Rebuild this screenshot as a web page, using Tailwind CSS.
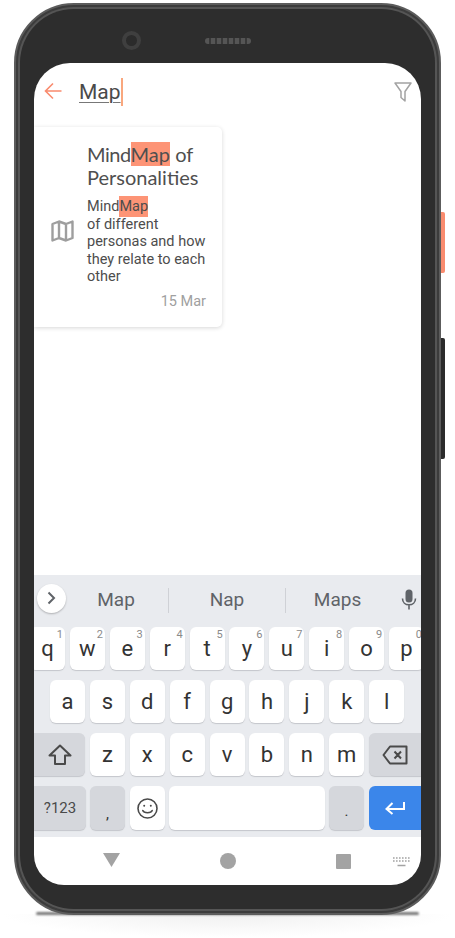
<!DOCTYPE html>
<html lang="en">
<head>
    <meta charset="UTF-8">
    <title>Search notes</title>
    <script src="https://cdn.jsdelivr.net/npm/@tailwindcss/browser@4"></script>
</head>
<body class="bg-white font-['Roboto',sans-serif]">

<div class="w-[455px] h-[938px] overflow-hidden pl-[14px] pt-[3px] relative">
    <!-- Shadow under the phone -->
    <div class="absolute left-[0px] top-[914px] w-[455px] h-[24px] bg-[radial-gradient(ellipse_at_top,#f0f0f0,#ffffff_70%)]"></div>
    <div class="absolute left-[36px] top-[912px] w-[383px] h-[3px] rounded-full bg-[#777777] blur-[1px]"></div>

    <!-- Side buttons -->
    <div class="absolute left-[439px] top-[212px] w-[6px] h-[61px] rounded-r-[2px] bg-[#f98b6e]"></div>
    <div class="absolute left-[439px] top-[338px] w-[6px] h-[121px] rounded-r-[2px] bg-[#2b2b2b]"></div>

    <!-- Phone frame -->
    <div class="relative w-[427px] h-[912px] rounded-[60px] bg-[#3c3c3c] border-2 border-[#5c5c5c] p-[2px]">
        <div class="w-full h-full rounded-[56px] bg-[#555555] p-[2px]">
            <div class="w-full h-full rounded-[54px] bg-[#2d2d2d] px-[14px] flex flex-col">

                <!-- Top bezel: camera and speaker -->
                <div class="h-[54px] shrink-0 flex items-start pt-[22px]">
                    <div class="ml-[88px] w-[19px] h-[19px] rounded-full border-[4px] border-[#3f3f3f] bg-[#2b2b2b]"></div>
                    <div class="ml-[64px] mt-[7px] w-[46px] h-[6px] rounded-full bg-[repeating-linear-gradient(90deg,#555555_0_4px,#383838_4px_6px)] blur-[0.5px]"></div>
                </div>

                <!-- Screen -->
                <div class="w-[387px] h-[822px] shrink-0 rounded-t-[36px] rounded-b-[30px] bg-white overflow-hidden flex flex-col">

                    <!-- Search bar -->
                    <div class="h-[64px] shrink-0 flex items-center pl-[10px] pr-[9px]">
                        <svg class="w-[18px] h-[18px] mt-[-8px]" viewBox="0 0 18 18" fill="none" stroke="#f98b6e" stroke-width="1.6">
                            <path d="M17.5 9H1.5M9 1.5L1.5 9L9 16.5"/>
                        </svg>
                        <div class="ml-[17px] mt-[-6px] h-[28px] flex items-center text-[21px] text-[#4a4a4a] leading-[28px] underline underline-offset-[3px] decoration-[#777777] decoration-[1px]">Map</div>
                        <div class="w-[2px] h-[28px] mt-[-6px] bg-[#f9a77e]"></div>
                        <svg class="ml-auto w-[18px] h-[20px] mt-[-6px]" viewBox="0 0 18 20" fill="none" stroke="#a3a3a3" stroke-width="1.5" stroke-linejoin="round">
                            <path d="M1 1H17L11 9.5V19L7 15.5V9.5Z"/>
                        </svg>
                    </div>

                    <!-- Results -->
                    <div class="flex-1 min-h-0">
                        <div class="w-[188px] h-[200px] rounded-r-[5px] bg-white shadow-[0_1px_4px_rgba(0,0,0,0.16)] flex pr-[16px]">
                            <div class="w-[53px] shrink-0 flex items-center justify-center pl-[3px] pt-[7px]">
                                <svg class="w-[23px] h-[22px]" viewBox="0 0 23 22" fill="none" stroke="#9e9e9e" stroke-width="2.4" stroke-linejoin="round">
                                    <path d="M1.5 4L8 1.5L15 4L21.5 1.5V18L15 20.5L8 18L1.5 20.5Z M8 1.5V18 M15 4V20.5"/>
                                </svg>
                            </div>
                            <div class="flex-1 min-w-0 pt-[16px]">
                                <h3 class="font-['Lato',sans-serif] text-[20px] leading-[23px] text-[#4f4f4f]"><span class="tracking-[-0.5px]">Mind</span><span class="bg-[#fd9476]">Map</span> of Personalities</h3>
                                <p class="mt-[9px] text-[14.5px] leading-[17.6px] text-[#4d4d4d]">Mind<span class="bg-[#fd9476] py-[2px]">Map</span><br>of different personas and how they relate to each other</p>
                                <div class="mt-[7px] text-right text-[14.5px] leading-[18px] text-[#a0a0a0]">15 Mar</div>
                            </div>
                        </div>
                    </div>

                    <!-- Keyboard -->
                    <div class="h-[262px] shrink-0 bg-[#e9ebef] text-[22px] text-[#333333]">
                        <!-- Suggestions -->
                        <div class="h-[52px] flex items-center pb-[2px] text-[19px] text-[#5f6368]">
                            <div class="ml-[3px] w-[29px] h-[29px] mt-[-4px] shrink-0 rounded-full bg-white shadow-[0_1px_2px_rgba(0,0,0,0.25)] flex items-center justify-center">
                                <svg class="w-[9px] h-[14px]" viewBox="0 0 9 14" fill="none" stroke="#5f6368" stroke-width="2"><path d="M1.5 1.5L7 7L1.5 12.5"/></svg>
                            </div>
                            <div class="w-[104px] text-center ml-[-2px]">Map</div>
                            <div class="w-px h-[25px] bg-[#cfd1d6]"></div>
                            <div class="w-[116px] text-center">Nap</div>
                            <div class="w-px h-[25px] bg-[#cfd1d6]"></div>
                            <div class="w-[103px] text-center">Maps</div>
                            <svg class="ml-[12px] w-[16px] h-[22px]" viewBox="0 0 16 22" fill="none">
                                <rect x="4.5" y="0.5" width="7" height="13" rx="3.5" fill="#5f6368"/>
                                <path d="M1.5 9.5C1.5 13.5 4.5 15.8 8 15.8S14.5 13.5 14.5 9.5M8 15.8V20.5" stroke="#5f6368" stroke-width="1.6"/>
                            </svg>
                        </div>

                        <!-- Row 1 -->
                        <div class="flex gap-[4.9px] ml-[-4px] w-[400px]">
                            <div class="relative w-[35px] h-[43px] shrink-0 rounded-[6px] bg-white shadow-[0_1px_1px_#c4c6cb] flex items-center justify-center">q<span class="absolute right-[2px] top-[1px] text-[11px] leading-[14px] text-[#8a8a8a]">1</span></div>
                            <div class="relative w-[35px] h-[43px] shrink-0 rounded-[6px] bg-white shadow-[0_1px_1px_#c4c6cb] flex items-center justify-center">w<span class="absolute right-[2px] top-[1px] text-[11px] leading-[14px] text-[#8a8a8a]">2</span></div>
                            <div class="relative w-[35px] h-[43px] shrink-0 rounded-[6px] bg-white shadow-[0_1px_1px_#c4c6cb] flex items-center justify-center">e<span class="absolute right-[2px] top-[1px] text-[11px] leading-[14px] text-[#8a8a8a]">3</span></div>
                            <div class="relative w-[35px] h-[43px] shrink-0 rounded-[6px] bg-white shadow-[0_1px_1px_#c4c6cb] flex items-center justify-center">r<span class="absolute right-[2px] top-[1px] text-[11px] leading-[14px] text-[#8a8a8a]">4</span></div>
                            <div class="relative w-[35px] h-[43px] shrink-0 rounded-[6px] bg-white shadow-[0_1px_1px_#c4c6cb] flex items-center justify-center">t<span class="absolute right-[2px] top-[1px] text-[11px] leading-[14px] text-[#8a8a8a]">5</span></div>
                            <div class="relative w-[35px] h-[43px] shrink-0 rounded-[6px] bg-white shadow-[0_1px_1px_#c4c6cb] flex items-center justify-center">y<span class="absolute right-[2px] top-[1px] text-[11px] leading-[14px] text-[#8a8a8a]">6</span></div>
                            <div class="relative w-[35px] h-[43px] shrink-0 rounded-[6px] bg-white shadow-[0_1px_1px_#c4c6cb] flex items-center justify-center">u<span class="absolute right-[2px] top-[1px] text-[11px] leading-[14px] text-[#8a8a8a]">7</span></div>
                            <div class="relative w-[35px] h-[43px] shrink-0 rounded-[6px] bg-white shadow-[0_1px_1px_#c4c6cb] flex items-center justify-center">i<span class="absolute right-[2px] top-[1px] text-[11px] leading-[14px] text-[#8a8a8a]">8</span></div>
                            <div class="relative w-[35px] h-[43px] shrink-0 rounded-[6px] bg-white shadow-[0_1px_1px_#c4c6cb] flex items-center justify-center">o<span class="absolute right-[2px] top-[1px] text-[11px] leading-[14px] text-[#8a8a8a]">9</span></div>
                            <div class="relative w-[35px] h-[43px] shrink-0 rounded-[6px] bg-white shadow-[0_1px_1px_#c4c6cb] flex items-center justify-center">p<span class="absolute right-[2px] top-[1px] text-[11px] leading-[14px] text-[#8a8a8a]">0</span></div>
                        </div>

                        <!-- Row 2 -->
                        <div class="flex gap-[4.9px] mt-[10px] pl-[16px]">
                            <div class="w-[35px] h-[43px] rounded-[6px] bg-white shadow-[0_1px_1px_#c4c6cb] flex items-center justify-center">a</div>
                            <div class="w-[35px] h-[43px] rounded-[6px] bg-white shadow-[0_1px_1px_#c4c6cb] flex items-center justify-center">s</div>
                            <div class="w-[35px] h-[43px] rounded-[6px] bg-white shadow-[0_1px_1px_#c4c6cb] flex items-center justify-center">d</div>
                            <div class="w-[35px] h-[43px] rounded-[6px] bg-white shadow-[0_1px_1px_#c4c6cb] flex items-center justify-center">f</div>
                            <div class="w-[35px] h-[43px] rounded-[6px] bg-white shadow-[0_1px_1px_#c4c6cb] flex items-center justify-center">g</div>
                            <div class="w-[35px] h-[43px] rounded-[6px] bg-white shadow-[0_1px_1px_#c4c6cb] flex items-center justify-center">h</div>
                            <div class="w-[35px] h-[43px] rounded-[6px] bg-white shadow-[0_1px_1px_#c4c6cb] flex items-center justify-center">j</div>
                            <div class="w-[35px] h-[43px] rounded-[6px] bg-white shadow-[0_1px_1px_#c4c6cb] flex items-center justify-center">k</div>
                            <div class="w-[35px] h-[43px] rounded-[6px] bg-white shadow-[0_1px_1px_#c4c6cb] flex items-center justify-center">l</div>
                        </div>

                        <!-- Row 3 -->
                        <div class="flex gap-[4.9px] mt-[10px]">
                            <div class="w-[51px] h-[43px] rounded-r-[6px] bg-[#d5d7dc] shadow-[0_1px_1px_#c4c6cb] flex items-center justify-center">
                                <svg class="w-[24px] h-[22px]" viewBox="0 0 24 22" fill="none" stroke="#4a4a4a" stroke-width="2" stroke-linejoin="round"><path d="M12 1.5L22.5 11.5H17V20H7V11.5H1.5Z"/></svg>
                            </div>
                            <div class="w-[35px] h-[43px] rounded-[6px] bg-white shadow-[0_1px_1px_#c4c6cb] flex items-center justify-center">z</div>
                            <div class="w-[35px] h-[43px] rounded-[6px] bg-white shadow-[0_1px_1px_#c4c6cb] flex items-center justify-center">x</div>
                            <div class="w-[35px] h-[43px] rounded-[6px] bg-white shadow-[0_1px_1px_#c4c6cb] flex items-center justify-center">c</div>
                            <div class="w-[35px] h-[43px] rounded-[6px] bg-white shadow-[0_1px_1px_#c4c6cb] flex items-center justify-center">v</div>
                            <div class="w-[35px] h-[43px] rounded-[6px] bg-white shadow-[0_1px_1px_#c4c6cb] flex items-center justify-center">b</div>
                            <div class="w-[35px] h-[43px] rounded-[6px] bg-white shadow-[0_1px_1px_#c4c6cb] flex items-center justify-center">n</div>
                            <div class="w-[35px] h-[43px] rounded-[6px] bg-white shadow-[0_1px_1px_#c4c6cb] flex items-center justify-center">m</div>
                            <div class="flex-1 h-[43px] rounded-l-[6px] bg-[#d5d7dc] shadow-[0_1px_1px_#c4c6cb] flex items-center justify-center">
                                <svg class="w-[26px] h-[20px]" viewBox="0 0 26 20" fill="none" stroke="#4a4a4a" stroke-width="2" stroke-linejoin="round"><path d="M8 1.5H24.5V18.5H8L1.5 10Z M12.5 6.5L19 13.5M19 6.5L12.5 13.5"/></svg>
                            </div>
                        </div>

                        <!-- Row 4 -->
                        <div class="flex mt-[10px]">
                            <div class="w-[52px] h-[44px] rounded-r-[6px] bg-[#d5d7dc] shadow-[0_1px_1px_#c4c6cb] flex items-center justify-center text-[15px] text-[#4a4a4a]">?123</div>
                            <div class="ml-[4px] w-[35px] h-[44px] rounded-[6px] bg-[#d5d7dc] shadow-[0_1px_1px_#c4c6cb] flex items-end justify-center pb-[8px] text-[15px] leading-[15px]">,</div>
                            <div class="ml-[5px] w-[35px] h-[44px] rounded-[6px] bg-white shadow-[0_1px_1px_#c4c6cb] flex items-center justify-center">
                                <svg class="w-[21px] h-[21px]" viewBox="0 0 21 21" fill="none" stroke="#4a4a4a" stroke-width="1.6"><circle cx="10.5" cy="10.5" r="9.5"/><path d="M5.8 12.5C7 15.5 14 15.5 15.2 12.5" stroke-linecap="round"/><circle cx="7.2" cy="7.8" r="1" fill="#4a4a4a" stroke="none"/><circle cx="13.8" cy="7.8" r="1" fill="#4a4a4a" stroke="none"/></svg>
                            </div>
                            <div class="ml-[4px] w-[156px] h-[44px] rounded-[6px] bg-white shadow-[0_1px_1px_#c4c6cb]"></div>
                            <div class="ml-[4px] w-[35px] h-[44px] rounded-[6px] bg-[#d5d7dc] shadow-[0_1px_1px_#c4c6cb] flex items-end justify-center pb-[11px] text-[15px] leading-[15px]">.</div>
                            <div class="ml-[5px] flex-1 h-[44px] rounded-l-[6px] bg-[#3b86ea] flex items-center justify-center">
                                <svg class="w-[20px] h-[14px]" viewBox="0 0 20 14" fill="none" stroke="white" stroke-width="2"><path d="M19 1V8H2M7.5 2L1.5 8L7.5 13"/></svg>
                            </div>
                        </div>
                    </div>

                    <!-- Navigation bar -->
                    <div class="h-[48px] shrink-0 relative">
                        <svg class="absolute left-[69px] top-[16px] w-[17px] h-[14px]" viewBox="0 0 17 14"><path d="M0 0H17L8.5 14Z" fill="#a3a3a3"/></svg>
                        <div class="absolute left-[186px] top-[16px] w-[16px] h-[16px] rounded-full bg-[#a3a3a3]"></div>
                        <div class="absolute left-[302px] top-[17px] w-[15px] h-[15px] rounded-[1px] bg-[#a3a3a3]"></div>
                        <svg class="absolute left-[359px] top-[20px] w-[17px] h-[10px]" viewBox="0 0 17 10" fill="none" stroke="#a3a3a3" stroke-width="1.4"><path d="M0 1H17M0 4H17" stroke-dasharray="1.6 1.4"/><path d="M4.5 8.5H12.5"/></svg>
                    </div>
                </div>
            </div>
        </div>
    </div>
</div>

</body>
</html>
